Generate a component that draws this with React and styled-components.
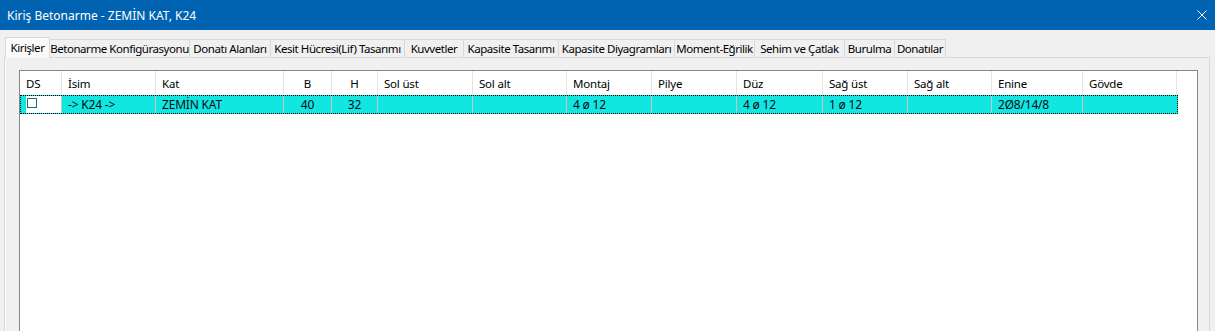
import React from 'react'
import styled, { createGlobalStyle } from 'styled-components'

const GlobalStyle = createGlobalStyle`
  html, body {
    margin: 0;
    padding: 0;
    background: #f0f0f0;
  }
  body {
    font-family: "Noto Sans", "Liberation Sans", sans-serif;
    font-size: 12px;
    color: #000;
  }
`

const Window = styled.div`
  width: 1215px;
  height: 331px;
  display: flex;
  flex-direction: column;
  overflow: hidden;
  background: #f0f0f0;
`

const TitleBar = styled.div`
  height: 30px;
  flex: none;
  display: flex;
  align-items: center;
  justify-content: space-between;
  padding: 0 8px 0 7px;
  background: #0063b1;
  color: #fff;
  font-size: 12px;
`

const CloseIcon = styled.svg`
  width: 10px;
  height: 10px;
  display: block;
`

const TabStrip = styled.div`
  flex: none;
  display: flex;
  align-items: flex-end;
  padding: 7px 0 0 5px;
`

const Tab = styled.div`
  box-sizing: border-box;
  width: ${p => p.$w}px;
  height: ${p => (p.$active ? 21 : 18)}px;
  margin-bottom: ${p => (p.$active ? -1 : 0)}px;
  padding-bottom: ${p => (p.$active ? 2 : 0)}px;
  display: flex;
  align-items: center;
  justify-content: center;
  white-space: nowrap;
  font-size: 11.5px;
  letter-spacing: -0.45px;
  border: 1px solid #d9d9d9;
  border-bottom: none;
  margin-left: -1px;
  background: ${p => (p.$active ? '#f9f9f9' : '#f0f0f0')};
  position: relative;
  z-index: ${p => (p.$active ? 2 : 1)};
  &:first-child {
    margin-left: 0;
  }
`

const Panel = styled.div`
  flex: 1;
  min-height: 0;
  display: flex;
  margin: 0 5px 0 4px;
  padding: 12px 11px 0 14px;
  border: 1px solid #d9d9d9;
  border-bottom: none;
  box-shadow: inset 1px 0 0 #fafafa;
  background: #f0f0f0;
`

const Grid = styled.div`
  flex: 1;
  background: #fff;
  border: 1px solid #828790;
  border-bottom: none;
`

const HeaderRow = styled.div`
  display: flex;
  height: 24px;
`

const HeaderCell = styled.div`
  box-sizing: border-box;
  width: ${p => p.$w}px;
  padding-left: ${p => (p.$center ? 0 : 6)}px;
  display: flex;
  align-items: center;
  justify-content: ${p => (p.$center ? 'center' : 'flex-start')};
  border-right: 1px solid #e5e5e5;
  white-space: nowrap;
  font-size: 11.5px;
  letter-spacing: -0.2px;
`

const DataRow = styled.div`
  box-sizing: border-box;
  display: flex;
  width: 1158px;
  height: 19px;
  border: 1px dotted #000;
  background: #12e6e1;
`

const DataCell = styled.div`
  box-sizing: border-box;
  width: ${p => p.$w}px;
  padding-left: ${p => (p.$center ? 0 : 6)}px;
  display: flex;
  align-items: center;
  justify-content: ${p => (p.$center ? 'center' : 'flex-start')};
  border-right: 1px solid #c4c4c4;
  white-space: nowrap;
  color: #0a0a14;
  font-size: 12px;
  letter-spacing: -0.2px;
  &:last-child {
    border-right: none;
  }
`

const CheckCell = styled.div`
  box-sizing: border-box;
  width: ${p => p.$w}px;
  border-left: 5px solid #12e6e1;
  border-right: 1px solid #c4c4c4;
  background: #fff;
  padding: 2px 0 0 1px;
`

const CheckBox = styled.div`
  width: 8px;
  height: 8px;
  border: 1px solid #1c6e6e;
`

const columns = [
  { key: 'ds', title: 'DS', w: 41 },
  { key: 'isim', title: 'İsim', w: 94 },
  { key: 'kat', title: 'Kat', w: 128 },
  { key: 'b', title: 'B', w: 48, center: true },
  { key: 'h', title: 'H', w: 46, center: true },
  { key: 'solust', title: 'Sol üst', w: 95 },
  { key: 'solalt', title: 'Sol alt', w: 94 },
  { key: 'montaj', title: 'Montaj', w: 85 },
  { key: 'pilye', title: 'Pilye', w: 85 },
  { key: 'duz', title: 'Düz', w: 86 },
  { key: 'sagust', title: 'Sağ üst', w: 85 },
  { key: 'sagalt', title: 'Sağ alt', w: 84 },
  { key: 'enine', title: 'Enine', w: 91 },
  { key: 'govde', title: 'Gövde', w: 94 },
]

const row = {
  isim: '-> K24 ->',
  kat: 'ZEMİN KAT',
  b: '40',
  h: '32',
  solust: '',
  solalt: '',
  montaj: '4 ø 12',
  pilye: '',
  duz: '4 ø 12',
  sagust: '1 ø 12',
  sagalt: '',
  enine: '2Ø8/14/8',
  govde: '',
}

const tabs = [
  { label: 'Kirişler', w: 45 },
  { label: 'Betonarme Konfigürasyonu', w: 141 },
  { label: 'Donatı Alanları', w: 82 },
  { label: 'Kesit Hücresi(Lif) Tasarımı', w: 135 },
  { label: 'Kuvvetler', w: 60 },
  { label: 'Kapasite Tasarımı', w: 96 },
  { label: 'Kapasite Diyagramları', w: 117 },
  { label: 'Moment-Eğrilik', w: 81 },
  { label: 'Sehim ve Çatlak', w: 91 },
  { label: 'Burulma', w: 51 },
  { label: 'Donatılar', w: 52 },
]

export default function App() {
  return (
    <>
      <GlobalStyle />
      <Window>
        <TitleBar>
          <span>Kiriş Betonarme - ZEMİN KAT, K24</span>
          <CloseIcon viewBox="0 0 10 10">
            <path d="M0.5 0.5 L9.5 9.5 M9.5 0.5 L0.5 9.5" stroke="#fff" strokeWidth="1" fill="none" />
          </CloseIcon>
        </TitleBar>
        <TabStrip>
          {tabs.map((t, i) => (
            <Tab key={t.label} $w={t.w} $active={i === 0}>
              {t.label}
            </Tab>
          ))}
        </TabStrip>
        <Panel>
          <Grid>
            <HeaderRow>
              {columns.map(c => (
                <HeaderCell key={c.key} $w={c.w + (c.key === 'ds' ? 1 : 0)} $center={c.center}>
                  {c.title}
                </HeaderCell>
              ))}
            </HeaderRow>
            <DataRow>
              {columns.map(c =>
                c.key === 'ds' ? (
                  <CheckCell key={c.key} $w={c.w}>
                    <CheckBox />
                  </CheckCell>
                ) : (
                  <DataCell key={c.key} $w={c.w} $center={c.center}>
                    {row[c.key]}
                  </DataCell>
                )
              )}
            </DataRow>
          </Grid>
        </Panel>
      </Window>
    </>
  )
}
